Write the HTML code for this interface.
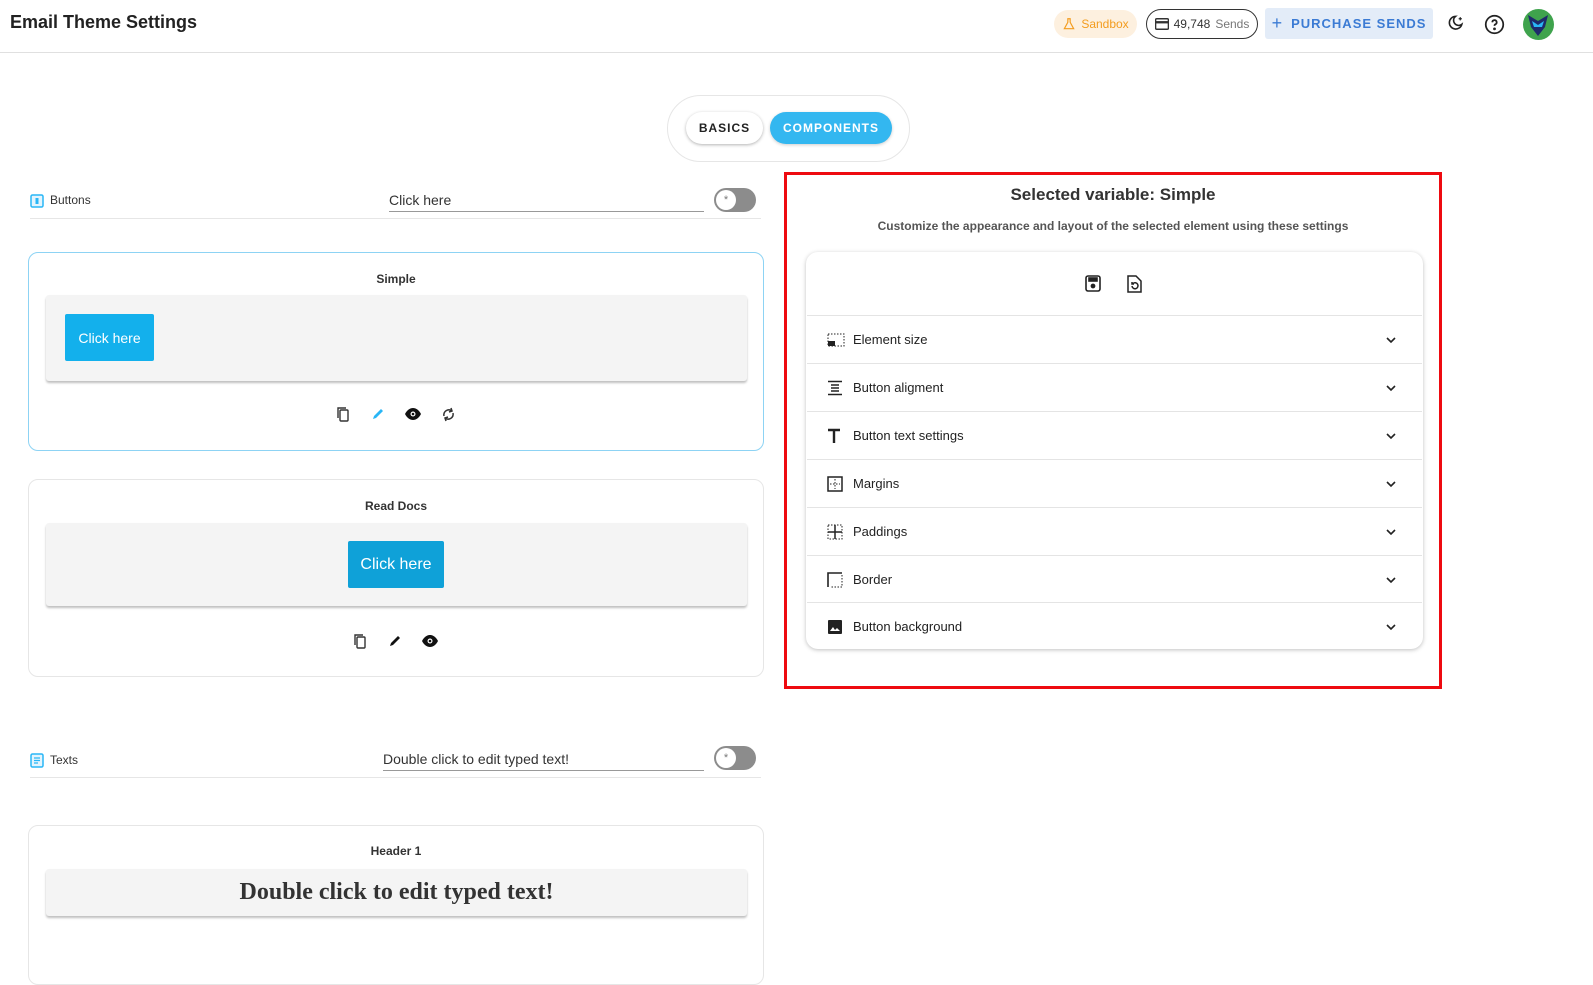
<!DOCTYPE html>
<html><head><meta charset="utf-8"><style>
*{box-sizing:border-box;margin:0;padding:0}
body{width:1593px;height:949px;overflow:hidden;background:#fff;font-family:"Liberation Sans",sans-serif;color:#222;position:relative}
.a{position:absolute}
.c{display:flex;align-items:center;justify-content:center}
.row{position:absolute;left:807px;width:615px;height:48px;border-top:1px solid #e4e4e4;display:flex;align-items:center;font-size:13px;color:#222}
.row svg.i{position:absolute;left:20px}
.row span{position:absolute;left:46px}
.row svg.ch{position:absolute;left:578px}
.card{position:absolute;left:28px;width:736px;border-radius:10px;background:#fff}
.prev{position:absolute;left:17px;width:701px;background:#f4f4f4;border-radius:3px;box-shadow:0 2px 2px rgba(0,0,0,.25)}
.ttl{position:absolute;left:0;width:100%;text-align:center;font-size:12px;font-weight:bold;color:#333}
.tog{position:absolute;width:42px;height:24px;border-radius:12px;background:#8c8c8c}
.tog::after{content:"*";position:absolute;left:2px;top:2px;width:20px;height:20px;border-radius:50%;background:#fff;color:#777;font-size:11px;text-align:center;line-height:20px}
</style></head><body>
<div class="a" style="left:10px;top:12px;font-size:18px;font-weight:bold;color:#222">Email Theme Settings</div>
<div class="a" style="left:0;top:52px;width:1593px;height:1px;background:#e0e0e0"></div>

<div class="a c" style="left:1054px;top:10px;width:83px;height:28px;border-radius:14px;background:#fdf0df;color:#f39c1e;font-size:12px;gap:5px">
<svg width="14" height="14" viewBox="0 0 24 24" fill="none" stroke="#f39c1e" stroke-width="2"><path d="M9 3h6M10 3v6L4 20h16L14 9V3"/></svg>Sandbox</div>
<div class="a c" style="left:1146px;top:9px;width:112px;height:30px;border-radius:15px;border:1.5px solid #333;font-size:12px;gap:5px;color:#333">
<svg width="14" height="12" viewBox="0 0 24 20"><rect x="1" y="1" width="22" height="18" rx="2" fill="none" stroke="#333" stroke-width="2.5"/><rect x="1" y="5" width="22" height="4" fill="#333"/></svg>49,748 <span style="color:#777">Sends</span></div>
<div class="a c" style="left:1265px;top:8px;width:168px;height:31px;border-radius:3px;background:#e3ecf8;color:#3b7bd4;font-size:13px;font-weight:bold;letter-spacing:1px;gap:8px"><span style="font-size:18px;font-weight:normal">+</span>PURCHASE SENDS</div>
<svg class="a" style="left:1446px;top:14px" width="19" height="19" viewBox="0 0 24 24" fill="none" stroke="#222" stroke-width="2"><path d="M12 3a8 8 0 1 0 8 10 6 6 0 0 1-8-10z"/><path d="M18 4v4M16 6h4" stroke-width="1.5"/></svg>
<svg class="a" style="left:1484px;top:14px" width="21" height="21" viewBox="0 0 24 24" fill="none" stroke="#222" stroke-width="2"><circle cx="12" cy="12" r="10"/><path d="M9.5 9.5a2.5 2.5 0 1 1 3.5 2.3c-.7.3-1 .9-1 1.7"/><circle cx="12" cy="17" r=".6" fill="#222"/></svg>
<div class="a" style="left:1523px;top:9px;width:31px;height:31px;border-radius:50%;background:#3fa34d;overflow:hidden"><svg width="31" height="31" viewBox="0 0 31 31"><path d="M5 6l10 6 10-6-3 12-7 9-7-9z" fill="#1e2a6b"/><path d="M9 12l6 4 6-4-2 6h-8z" fill="#29b6f6"/></svg></div>

<div class="a" style="left:667px;top:95px;width:243px;height:67px;border-radius:34px;border:1px solid #e6e6e6"></div>
<div class="a c" style="left:686px;top:112px;width:77px;height:32px;border-radius:16px;background:#fff;box-shadow:0 1px 3px rgba(0,0,0,.3);font-size:12px;font-weight:bold;letter-spacing:1px;color:#222">BASICS</div>
<div class="a c" style="left:770px;top:112px;width:122px;height:32px;border-radius:16px;background:#33b7f0;box-shadow:0 1px 3px rgba(0,0,0,.2);font-size:12px;font-weight:bold;letter-spacing:1px;color:#fff">COMPONENTS</div>

<!-- Buttons row -->
<svg class="a" style="left:30px;top:194px" width="14" height="14" viewBox="0 0 14 14"><rect x="1" y="1" width="12" height="12" rx="1.5" fill="#e3f4fd" stroke="#29b6f6" stroke-width="1.5"/><rect x="5.5" y="4" width="3" height="6" fill="#29b6f6"/></svg>
<div class="a" style="left:50px;top:193px;font-size:12px;color:#333">Buttons</div>
<div class="a" style="left:389px;top:192px;width:315px;height:20px;border-bottom:1px solid #999;font-size:14px;color:#333">Click here</div>
<div class="tog" style="left:714px;top:188px"></div>
<div class="a" style="left:30px;top:218px;width:731px;height:1px;background:#e6e6e6"></div>

<div class="card" style="top:252px;height:199px;border:1px solid #8dd3f4">
<div class="ttl" style="top:19px">Simple</div>
<div class="prev" style="top:42px;height:86px"><div class="a c" style="left:19px;top:19px;width:89px;height:47px;background:#13b0ec;border-radius:2px;color:#fff;font-size:14px">Click here</div></div>
</div>
<svg class="a" style="left:336px;top:406px" width="14" height="16" viewBox="0 0 14 16" fill="none" stroke="#333" stroke-width="1.4"><rect x="4" y="4" width="8" height="11" rx="1"/><path d="M2 12V2h8"/></svg>
<svg class="a" style="left:371px;top:407px" width="14" height="14" viewBox="0 0 14 14"><path d="M2 12l1-3 7-7 2 2-7 7z" fill="#29b6f6"/></svg>
<svg class="a" style="left:405px;top:408px" width="16" height="12" viewBox="0 0 16 12"><path d="M0 6c2-4 5-6 8-6s6 2 8 6c-2 4-5 6-8 6S2 10 0 6z" fill="#111"/><circle cx="8" cy="6" r="2.5" fill="#fff"/><circle cx="8" cy="6" r="1.3" fill="#111"/></svg>
<svg class="a" style="left:442px;top:407px" width="13" height="15" viewBox="0 0 13 15" fill="none" stroke="#333" stroke-width="1.5"><path d="M2 9a5 5 0 0 1 8-5M11 6a5 5 0 0 1-8 5"/><path d="M9 1l1 3-3 1M4 14l-1-3 3-1"/></svg>

<div class="card" style="top:479px;height:198px;border:1px solid #e6e6e6">
<div class="ttl" style="top:19px">Read Docs</div>
<div class="prev" style="top:43px;height:83px"><div class="a c" style="left:302px;top:18px;width:96px;height:47px;background:#0fa1d8;border-radius:2px;color:#fff;font-size:16px">Click here</div></div>
</div>
<svg class="a" style="left:353px;top:633px" width="14" height="16" viewBox="0 0 14 16" fill="none" stroke="#333" stroke-width="1.4"><rect x="4" y="4" width="8" height="11" rx="1"/><path d="M2 12V2h8"/></svg>
<svg class="a" style="left:388px;top:634px" width="14" height="14" viewBox="0 0 14 14"><path d="M2 12l1-3 7-7 2 2-7 7z" fill="#111"/></svg>
<svg class="a" style="left:422px;top:635px" width="16" height="12" viewBox="0 0 16 12"><path d="M0 6c2-4 5-6 8-6s6 2 8 6c-2 4-5 6-8 6S2 10 0 6z" fill="#111"/><circle cx="8" cy="6" r="2.5" fill="#fff"/><circle cx="8" cy="6" r="1.3" fill="#111"/></svg>

<!-- Texts row -->
<svg class="a" style="left:30px;top:753px" width="14" height="15" viewBox="0 0 14 15"><rect x="1" y="1" width="12" height="13" rx="1.5" fill="#e3f4fd" stroke="#29b6f6" stroke-width="1.5"/><path d="M4 5h6M4 7.5h6M4 10h4" stroke="#29b6f6" stroke-width="1.3"/></svg>
<div class="a" style="left:50px;top:753px;font-size:12px;color:#333">Texts</div>
<div class="a" style="left:383px;top:751px;width:321px;height:20px;border-bottom:1px solid #999;font-size:14px;color:#333">Double click to edit typed text!</div>
<div class="tog" style="left:714px;top:746px"></div>
<div class="a" style="left:30px;top:777px;width:731px;height:1px;background:#e6e6e6"></div>

<div class="card" style="top:825px;height:160px;border:1px solid #e6e6e6">
<div class="ttl" style="top:18px">Header 1</div>
<div class="prev" style="top:43px;height:47px"><div class="a c" style="left:0;top:0;width:100%;height:47px;font-family:'Liberation Serif',serif;font-size:24px;font-weight:bold;color:#333">Double click to edit typed text!</div></div>
</div>

<!-- Right panel -->
<div class="a" style="left:784px;top:172px;width:658px;height:517px;border:3px solid #ee0a10"></div>
<div class="a" style="left:784px;top:185px;width:658px;text-align:center;font-size:17px;font-weight:bold;color:#333">Selected variable: Simple</div>
<div class="a" style="left:784px;top:219px;width:658px;text-align:center;font-size:12px;font-weight:bold;color:#555">Customize the appearance and layout of the selected element using these settings</div>
<div class="a" style="left:806px;top:252px;width:617px;height:397px;border-radius:12px;background:#fff;box-shadow:0 1px 4px rgba(0,0,0,.25)"></div>
<svg class="a" style="left:1085px;top:275px" width="16" height="17" viewBox="0 0 16 17" fill="none" stroke="#222" stroke-width="1.6"><rect x="1" y="1" width="14" height="15" rx="2"/><rect x="4" y="3" width="8" height="3" fill="#222"/><circle cx="8" cy="11" r="1.6" fill="#222"/></svg>
<svg class="a" style="left:1127px;top:275px" width="15" height="18" viewBox="0 0 15 18" fill="none" stroke="#222" stroke-width="1.5"><path d="M1 1h8l5 5v11H1z"/><path d="M5 11a3 3 0 1 0 1-2.5M5 7v2h2"/></svg>

<div class="row" style="top:315px"><svg class="i" width="18" height="14" viewBox="0 0 18 14"><rect x="1" y="1" width="16" height="12" fill="none" stroke="#222" stroke-dasharray="1.5 1.5"/><rect x="1" y="8" width="7" height="5" fill="#222"/></svg><span>Element size</span><svg class="ch" width="12" height="8" viewBox="0 0 12 8"><path d="M2 2l4 4 4-4" fill="none" stroke="#222" stroke-width="1.6"/></svg></div>
<div class="row" style="top:363px"><svg class="i" width="16" height="16" viewBox="0 0 16 16"><path d="M1 1.5h14M1 14.5h14M4 5h8M4 8h8M4 11h8" stroke="#222" stroke-width="1.6"/></svg><span>Button aligment</span><svg class="ch" width="12" height="8" viewBox="0 0 12 8"><path d="M2 2l4 4 4-4" fill="none" stroke="#222" stroke-width="1.6"/></svg></div>
<div class="row" style="top:411px"><svg class="i" width="14" height="15" viewBox="0 0 14 15"><path d="M1 2h12M7 2v13" stroke="#222" stroke-width="2.4"/></svg><span>Button text settings</span><svg class="ch" width="12" height="8" viewBox="0 0 12 8"><path d="M2 2l4 4 4-4" fill="none" stroke="#222" stroke-width="1.6"/></svg></div>
<div class="row" style="top:459px"><svg class="i" width="16" height="16" viewBox="0 0 16 16"><rect x="1" y="1" width="14" height="14" fill="none" stroke="#222" stroke-width="1.5"/><path d="M8 3v10M3 8h10" stroke="#222" stroke-dasharray="1.5 1.5"/></svg><span>Margins</span><svg class="ch" width="12" height="8" viewBox="0 0 12 8"><path d="M2 2l4 4 4-4" fill="none" stroke="#222" stroke-width="1.6"/></svg></div>
<div class="row" style="top:507px"><svg class="i" width="16" height="16" viewBox="0 0 16 16"><rect x="1" y="1" width="14" height="14" fill="none" stroke="#222" stroke-dasharray="1.5 1.5"/><path d="M8 1v14M1 8h14" stroke="#222" stroke-width="1.5"/></svg><span>Paddings</span><svg class="ch" width="12" height="8" viewBox="0 0 12 8"><path d="M2 2l4 4 4-4" fill="none" stroke="#222" stroke-width="1.6"/></svg></div>
<div class="row" style="top:555px"><svg class="i" width="16" height="16" viewBox="0 0 16 16"><path d="M1 15V1h14" fill="none" stroke="#222" stroke-width="1.6"/><path d="M15 3v12H3" fill="none" stroke="#222" stroke-dasharray="1.5 1.5"/></svg><span>Border</span><svg class="ch" width="12" height="8" viewBox="0 0 12 8"><path d="M2 2l4 4 4-4" fill="none" stroke="#222" stroke-width="1.6"/></svg></div>
<div class="row" style="top:602px"><svg class="i" width="16" height="16" viewBox="0 0 16 16"><rect x="1" y="1" width="14" height="14" rx="1" fill="#222"/><path d="M3 12l3-4 2 3 2-2 3 3z" fill="#fff"/></svg><span>Button background</span><svg class="ch" width="12" height="8" viewBox="0 0 12 8"><path d="M2 2l4 4 4-4" fill="none" stroke="#222" stroke-width="1.6"/></svg></div>
</body></html>
